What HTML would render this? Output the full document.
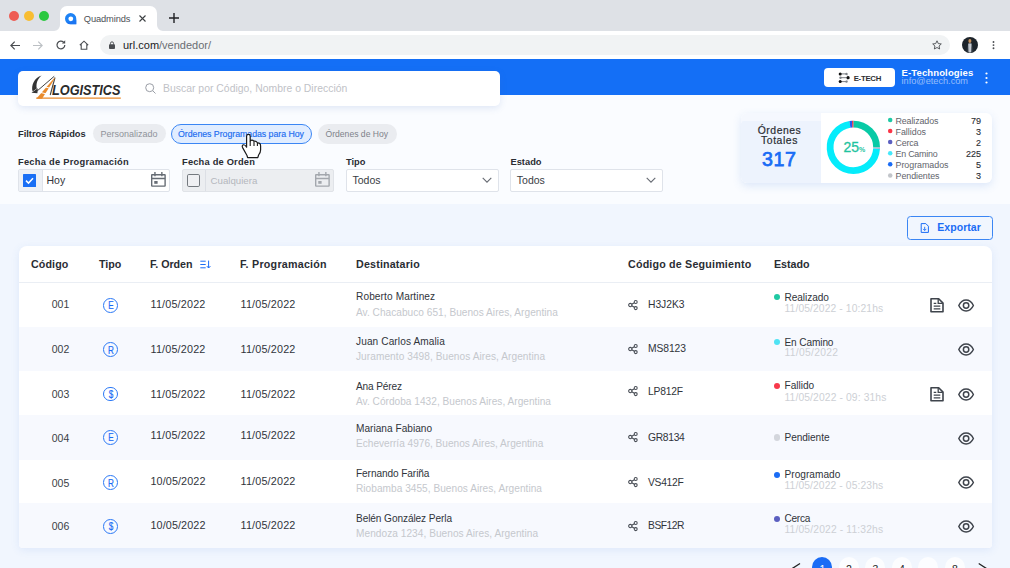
<!DOCTYPE html>
<html lang="es">
<head>
<meta charset="utf-8">
<title>Quadminds</title>
<style>
*{box-sizing:border-box;margin:0;padding:0}
html,body{width:1010px;height:568px;overflow:hidden}
body{position:relative;font-family:"Liberation Sans",sans-serif;background:#f1f6fe;color:#222}
.abs{position:absolute}
.t{position:absolute;white-space:nowrap;line-height:1}
svg{overflow:visible}
</style>
</head>
<body>
<div class="abs" style="left:0px;top:0px;width:1010px;height:31px;background:#dee1e6"></div>
<div class="abs" style="left:9px;top:11px;width:10px;height:10px;border-radius:50%;background:#ee5c54"></div>
<div class="abs" style="left:24px;top:11px;width:10px;height:10px;border-radius:50%;background:#f8bd32"></div>
<div class="abs" style="left:39px;top:11px;width:10px;height:10px;border-radius:50%;background:#2bc840"></div>
<div class="abs" style="left:60px;top:6px;width:97px;height:25px;background:#fff;border-radius:7px 7px 0 0"></div>
<svg class="abs" style="left:54px;top:25px;" width="6" height="6" viewBox="0 0 6 6"><path d="M6 0v6H0A6 6 0 0 0 6 0z" fill="#fff"/></svg>
<svg class="abs" style="left:157px;top:25px;" width="6" height="6" viewBox="0 0 6 6"><path d="M0 0v6h6A6 6 0 0 1 0 0z" fill="#fff"/></svg>
<svg class="abs" style="left:65.1px;top:12.7px;" width="11.3" height="11.3" viewBox="0 0 11.3 11.3"><path d="M5.650 0A5.650 5.650 0 1 0 5.650 11.300H11.300V5.650A5.650 5.650 0 0 0 5.650 0z" fill="#1d82f5"/><path d="M1.400 9.400A5.650 5.650 0 0 0 5.650 11.300H11.300V7z" fill="#1a6cf0" opacity=".6"/><circle cx="5.800" cy="5.800" r="2.400" fill="#fff"/></svg>
<div class="t" style="top:15px;font-size:9.3px;color:#4d5156;letter-spacing:-0.118px;left:83.8px;">Quadminds</div>
<svg class="abs" style="left:139px;top:14.5px;" width="7" height="7" viewBox="0 0 7 7"><path d="M.5.5l6 6M6.500 .5l-6 6" stroke="#3c4043" stroke-width="1.1" fill="none"/></svg>
<svg class="abs" style="left:168.5px;top:13px;" width="10" height="10" viewBox="0 0 10 10"><path d="M5 0v10M0 5h10" stroke="#202124" stroke-width="1.4" fill="none"/></svg>
<div class="abs" style="left:0px;top:31px;width:1010px;height:28px;background:#fff"></div>
<div class="abs" style="left:100px;top:35px;width:850px;height:20px;border-radius:10px;background:#f1f3f4"></div>
<svg class="abs" style="left:9.5px;top:40.5px;" width="10" height="9" viewBox="0 0 10 9"><path d="M10 4.500H1M4.700 .7L.9 4.500l3.800 3.800" stroke="#4a4d51" stroke-width="1.2" fill="none"/></svg>
<svg class="abs" style="left:32.5px;top:40.5px;" width="10" height="9" viewBox="0 0 10 9"><path d="M0 4.500h9M5.300 .7l3.800 3.800-3.800 3.800" stroke="#bcc0c4" stroke-width="1.2" fill="none"/></svg>
<svg class="abs" style="left:55.5px;top:40px;" width="10" height="10" viewBox="0 0 10 10"><path d="M8.800 5A3.900 3.900 0 1 1 7.600 2.200" stroke="#4a4d51" stroke-width="1.2" fill="none"/><path d="M9.200 .3v3.300H5.900z" fill="#4a4d51"/></svg>
<svg class="abs" style="left:78.5px;top:40px;" width="10" height="10" viewBox="0 0 10 10"><path d="M.8 5.200L5 1.200l4.200 4M2.200 4.300v4.900h5.600V4.300" stroke="#4a4d51" stroke-width="1.1" fill="none"/></svg>
<svg class="abs" style="left:109px;top:41px;" width="6" height="8.2" viewBox="0 0 7 9"><rect x="0" y="3.600" width="7" height="5.400" rx="1" fill="#4a4d51"/><path d="M1.700 4V2.500a1.800 1.800 0 0 1 3.600 0V4" stroke="#4a4d51" stroke-width="1.100" fill="none"/></svg>
<div class="t" style="top:40px;font-size:11px;color:#202124;left:123px;">url.com<span style="color:#6a6e73">/vendedor/</span></div>
<svg class="abs" style="left:931.5px;top:40px;" width="10" height="10" viewBox="0 0 10 10"><path d="M5 .8l1.300 2.800 3 .35-2.250 2.050.6 3L5 7.500 2.350 9l.6-3L.7 3.950l3-.35z" stroke="#4a4d51" stroke-width=".9" fill="none" stroke-linejoin="round"/></svg>
<svg class="abs" style="left:962px;top:37px;" width="16" height="16" viewBox="0 0 16 16"><circle cx="8" cy="8" r="8" fill="#1d242b"/><path d="M4.500 14.800C4.800 9 6 6.500 8 6.500s3.200 2.500 3.500 8.300A8 8 0 0 1 4.500 14.800z" fill="#2c353e"/><path d="M6.300 6.500h3.200l-.3 8.800a8 8 0 0 1-2.600 0z" fill="#dfe3e8"/><path d="M7.300 6.500h1.200v8.700h-1.200z" fill="#8b949e" opacity=".55"/><ellipse cx="7.900" cy="3.900" rx="1.500" ry="2" fill="#c9945f"/></svg>
<svg class="abs" style="left:992.2px;top:40px;" width="3" height="11" viewBox="0 0 3 11"><circle cx="1.500" cy="2" r=".95" fill="#4a4d51"/><circle cx="1.500" cy="5.100" r=".95" fill="#4a4d51"/><circle cx="1.500" cy="8.300" r=".95" fill="#4a4d51"/></svg>
<div class="abs" style="left:0px;top:94px;width:1010px;height:110px;background:#fafcff"></div>
<div class="abs" style="left:0px;top:59px;width:1010px;height:35.5px;background:#146ff6"></div>
<div class="abs" style="left:18px;top:71px;width:482px;height:34.5px;background:#fff;border-radius:5px;box-shadow:0 2px 7px rgba(70,110,190,.15)"></div>
<svg class="abs" style="left:25px;top:70px;" width="105" height="35" viewBox="25 70 105 35">
<path d="M41.600 75.400C34.500 77.500 30.800 85 32.600 91.500L36.800 88.400C35.800 83.500 37.600 78.500 41.600 75.400z" fill="#333"/>
<path d="M31.500 92.800l6.300-4.600-.4 5z" fill="#333"/>
<path d="M54.200 76.300L36.500 91.500" stroke="#444" stroke-width="1" fill="none"/>
<path d="M55 77.500L50.200 95" stroke="#444" stroke-width="1.100" fill="none"/>
<path d="M54.300 78L55 78.300 42 98.800H36.300z" fill="#e98a2b"/>
<path d="M44 86.500l5 1.500M40 92.300l6 1.500" stroke="#fff" stroke-width="1" fill="none"/>
<path d="M36.300 98.200H120.800" stroke="#e98a2b" stroke-width="1.300" fill="none"/>
<text x="52" y="95" font-family="Liberation Sans, sans-serif" font-weight="700" font-style="italic" font-size="14" fill="#2b2b2b" textLength="68.500" lengthAdjust="spacingAndGlyphs">LOGISTICS</text>
</svg>
<svg class="abs" style="left:144.5px;top:82.8px;" width="11" height="11" viewBox="0 0 11 11"><circle cx="4.700" cy="4.700" r="4" stroke="#9a9ea6" stroke-width="1" fill="none"/><path d="M7.700 7.700l2.800 2.800" stroke="#9a9ea6" stroke-width="1" fill="none"/></svg>
<div class="t" style="top:84px;font-size:10.4px;color:#bfc2c7;letter-spacing:0.018px;left:163px;">Buscar por Código, Nombre o Dirección</div>
<div class="abs" style="left:824px;top:68px;width:71px;height:19px;background:#fff;border-radius:4px"></div>
<svg class="abs" style="left:838px;top:71px;" width="12" height="14" viewBox="838 71 12 14"><g stroke="#6b6f75" stroke-width=".9" fill="none"><path d="M840.200 73.900H846.500M840.500 77.700H848.100M840.200 81.600H846.500"/><path d="M846.500 73.900L848.100 77.700 846.500 81.600" stroke="#b5b8bd" stroke-width=".6"/></g>
<g fill="#111"><circle cx="840.200" cy="73.900" r="1.500"/><circle cx="848.100" cy="77.700" r="1.600"/><circle cx="840.200" cy="81.600" r="1.500"/></g>
<g fill="#7d8187"><circle cx="846.500" cy="73.900" r="1.200"/><circle cx="840.500" cy="77.700" r="1.200"/><circle cx="846.500" cy="81.600" r="1.200"/></g></svg>
<div class="t" style="top:75px;font-size:7.8px;color:#2e3034;font-weight:700;letter-spacing:-0.289px;left:853.7px;">E-TECH</div>
<div class="t" style="top:68px;font-size:9.5px;color:#fff;font-weight:700;left:901.5px;letter-spacing:.13px;">E-Technologies</div>
<div class="t" style="top:77px;font-size:9.2px;color:rgba(255,255,255,.55);left:901.5px;">info@etech.com</div>
<svg class="abs" style="left:984.5px;top:72px;" width="3" height="12" viewBox="0 0 3 12"><circle cx="1.500" cy="1.500" r="1.100" fill="#fff"/><circle cx="1.500" cy="6" r="1.100" fill="#fff"/><circle cx="1.500" cy="10.500" r="1.100" fill="#fff"/></svg>
<div class="t" style="top:130px;font-size:9.3px;color:#2a2d33;font-weight:700;left:18px;">Filtros Rápidos</div>
<div class="abs" style="left:92.8px;top:124.2px;width:72.8px;height:19.2px;background:#eaecf0;border-radius:10px"></div>
<div class="t" style="top:130px;font-size:9px;color:#8f939a;left:100.5px;">Personalizado</div>
<div class="abs" style="left:171px;top:124px;width:140.5px;height:19.5px;background:#e1edff;border:1px solid #3b86f4;border-radius:10px"></div>
<div class="t" style="top:130px;font-size:8.8px;color:#1b6cf0;letter-spacing:-0.042px;left:178px;-webkit-text-stroke:.15px #1b6cf0;">Órdenes Programadas para Hoy</div>
<div class="abs" style="left:317.5px;top:124px;width:79px;height:19.5px;background:#eaecf0;border-radius:10px"></div>
<div class="t" style="top:130px;font-size:8.6px;color:#7e828a;left:325.5px;">Órdenes de Hoy</div>
<div class="t" style="top:158px;font-size:9.3px;color:#2a2d33;font-weight:700;left:18px;letter-spacing:.26px;">Fecha de Programación</div>
<div class="abs" style="left:18px;top:168.5px;width:152px;height:23px;background:#fff;border:1px solid #dfe3ea;border-radius:2px"></div>
<div class="abs" style="left:19px;top:169.5px;width:23.5px;height:21px;background:#eef1f6;border-right:1px solid #dfe3ea"></div>
<div class="abs" style="left:23px;top:174px;width:13px;height:12.8px;background:#1a6ff5;border-radius:.6px"></div>
<svg class="abs" style="left:23px;top:174px;" width="13" height="13" viewBox="0 0 13 13"><path d="M3 6.600l2.500 2.500L10 4.300" stroke="#fff" stroke-width="1.500" fill="none"/></svg>
<div class="t" style="top:175px;font-size:10.5px;color:#33363c;left:46.5px;">Hoy</div>
<svg class="abs" style="left:150.9px;top:171.9px;" width="14.8" height="14.9" viewBox="0 0 15 15"><g stroke="#666c74" stroke-width="1.400" fill="none"><rect x=".7" y="2.700" width="13.600" height="11.600" rx=".4"/><path d="M.7 6.600h13.600M4 0v4.200M11 0v4.200"/></g><rect x="3.300" y="9.100" width="3.400" height="2.800" fill="#666c74"/></svg>
<div class="t" style="top:158px;font-size:9.3px;color:#2a2d33;font-weight:700;left:182px;letter-spacing:.2px;">Fecha de Orden</div>
<div class="abs" style="left:182px;top:168.5px;width:152px;height:23px;background:#eceef1;border:1px solid #e0e3e8;border-radius:2px"></div>
<div class="abs" style="left:183px;top:169.5px;width:23px;height:21px;border-right:1px solid #dcdfe5"></div>
<div class="abs" style="left:187.3px;top:173.9px;width:12.9px;height:12.8px;border:1.400px solid #74797f;border-radius:1.800px;background:#eff0f3"></div>
<div class="t" style="top:176px;font-size:9.7px;color:#b4b7bd;left:210.5px;">Cualquiera</div>
<svg class="abs" style="left:315px;top:171.9px;" width="14.8" height="14.9" viewBox="0 0 15 15"><g stroke="#a3a7ad" stroke-width="1.400" fill="none"><rect x=".7" y="2.700" width="13.600" height="11.600" rx=".4"/><path d="M.7 6.600h13.600M4 0v4.200M11 0v4.200"/></g><rect x="3.300" y="9.100" width="3.400" height="2.800" fill="#a3a7ad"/></svg>
<div class="t" style="top:158px;font-size:9.3px;color:#2a2d33;font-weight:700;left:346px;">Tipo</div>
<div class="abs" style="left:346px;top:168.5px;width:152.5px;height:23px;background:#fff;border:1px solid #dfe3ea;border-radius:2px"></div>
<div class="t" style="top:175px;font-size:10.5px;color:#393d45;left:352.5px;">Todos</div>
<svg class="abs" style="left:482px;top:177px;" width="10" height="6" viewBox="0 0 10 6"><path d="M.7 .8l4.300 4.300L9.300 .8" stroke="#676b73" stroke-width="1.100" fill="none"/></svg>
<div class="t" style="top:158px;font-size:9.3px;color:#2a2d33;font-weight:700;left:510.5px;">Estado</div>
<div class="abs" style="left:510px;top:168.5px;width:152.5px;height:23px;background:#fff;border:1px solid #dfe3ea;border-radius:2px"></div>
<div class="t" style="top:175px;font-size:10.5px;color:#393d45;left:516.8px;">Todos</div>
<svg class="abs" style="left:646px;top:177px;" width="10" height="6" viewBox="0 0 10 6"><path d="M.7 .8l4.300 4.300L9.300 .8" stroke="#676b73" stroke-width="1.100" fill="none"/></svg>
<div class="abs" style="left:741px;top:112.5px;width:251px;height:70.5px;background:#fff;border-radius:6px;box-shadow:0 3px 8px rgba(80,130,220,.17)"></div>
<div class="abs" style="left:741px;top:112.5px;width:79.5px;height:9px;background:#f5f8fe;border-radius:6px 0 0 0"></div>
<div class="abs" style="left:740.5px;top:121px;width:80px;height:62px;background:#edf3fd;border-radius:3px 0 0 6px"></div>
<div class="t" style="top:126px;font-size:10.4px;color:#2a2d33;letter-spacing:0.516px;left:679.5px;width:200px;text-align:center;-webkit-text-stroke:.2px #2a2d33;">Órdenes</div>
<div class="t" style="top:136px;font-size:10.4px;color:#2a2d33;letter-spacing:0.550px;left:679.5px;width:200px;text-align:center;-webkit-text-stroke:.2px #2a2d33;">Totales</div>
<div class="t" style="top:150px;font-size:19.6px;color:#1a6cf5;letter-spacing:0.566px;left:679.2px;width:200px;text-align:center;-webkit-text-stroke:.75px #1a6cf5;">317</div>
<svg class="abs" style="left:0;top:0" width="1010" height="568" viewBox="0 0 1010 568"><path d="M853.35 124.05A23.25 23.25 0 0 1 876.60 147.50" stroke="#08caa6" stroke-width="6.8" fill="none"/><path d="M876.60 147.50A23.25 23.25 0 0 1 876.56 148.72" stroke="#b9a9c9" stroke-width="6.8" fill="none"/><path d="M876.56 148.72A23.25 23.25 0 1 1 849.91 124.31" stroke="#05ecfb" stroke-width="6.8" fill="none"/><path d="M849.91 124.31A23.25 23.25 0 0 1 852.13 124.08" stroke="#1f5cf5" stroke-width="6.8" fill="none"/><path d="M852.13 124.08A23.25 23.25 0 0 1 853.35 124.05" stroke="#e8344e" stroke-width="6.8" fill="none"/></svg>
<div class="t" style="left:804.200px;width:100px;text-align:center;top:139.98px;font-size:14px;color:#1fc3a0;-webkit-text-stroke:.3px #1fc3a0">25<span style="font-size:7px;font-weight:700;-webkit-text-stroke:0;letter-spacing:-.2px">%</span></div>
<div class="t" style="top:117px;font-size:8.9px;color:#5f646c;letter-spacing:-0.113px;left:895.5px;">Realizados</div>
<div class="t" style="top:117px;font-size:9px;color:#2a2d33;left:781px;width:200px;text-align:right;-webkit-text-stroke:.12px #2a2d33;">79</div>
<div class="t" style="top:128px;font-size:8.9px;color:#5f646c;letter-spacing:-0.009px;left:895.5px;">Fallidos</div>
<div class="t" style="top:128px;font-size:9px;color:#2a2d33;left:781px;width:200px;text-align:right;-webkit-text-stroke:.12px #2a2d33;">3</div>
<div class="t" style="top:139px;font-size:8.9px;color:#5f646c;letter-spacing:-0.208px;left:895.5px;">Cerca</div>
<div class="t" style="top:139px;font-size:9px;color:#2a2d33;left:781px;width:200px;text-align:right;-webkit-text-stroke:.12px #2a2d33;">2</div>
<div class="t" style="top:150px;font-size:8.9px;color:#5f646c;letter-spacing:-0.214px;left:895.5px;">En Camino</div>
<div class="t" style="top:150px;font-size:9px;color:#2a2d33;left:781px;width:200px;text-align:right;-webkit-text-stroke:.12px #2a2d33;">225</div>
<div class="t" style="top:161px;font-size:8.9px;color:#5f646c;letter-spacing:-0.030px;left:895.5px;">Programados</div>
<div class="t" style="top:161px;font-size:9px;color:#2a2d33;left:781px;width:200px;text-align:right;-webkit-text-stroke:.12px #2a2d33;">5</div>
<div class="t" style="top:172px;font-size:8.9px;color:#5f646c;letter-spacing:-0.044px;left:895.5px;">Pendientes</div>
<div class="t" style="top:172px;font-size:9px;color:#2a2d33;left:781px;width:200px;text-align:right;-webkit-text-stroke:.12px #2a2d33;">3</div>
<svg class="abs" style="left:0;top:0" width="1010" height="200" viewBox="0 0 1010 200"><circle cx="890.200" cy="119.90" r="2.250" fill="#1fc9a5"/><circle cx="890.200" cy="131.00" r="2.250" fill="#fb3547"/><circle cx="890.200" cy="142.10" r="2.250" fill="#5b5fc0"/><circle cx="890.200" cy="153.20" r="2.250" fill="#45e8fa"/><circle cx="890.200" cy="164.30" r="2.250" fill="#1a6cf5"/><circle cx="890.200" cy="175.40" r="2.250" fill="#c2c5ca"/></svg>
<div class="abs" style="left:907px;top:216px;width:86px;height:24px;border:1px solid #3b86f4;border-radius:3.500px"></div>
<svg class="abs" style="left:920px;top:222.7px;" width="9" height="10" viewBox="0 0 9 10"><path d="M1.200 .6h4.600l2.600 2.600v6.200H1.200z" stroke="#1a6cf5" stroke-width="1" fill="none" stroke-linejoin="round"/><path d="M4.700 3.800v3.600M3.100 5.900l1.600 1.600 1.600-1.600" stroke="#1a6cf5" stroke-width=".9" fill="none"/></svg>
<div class="t" style="top:222px;font-size:10.5px;color:#1a6cf5;font-weight:700;letter-spacing:0.052px;left:937.3px;">Exportar</div>
<div class="abs" style="left:19px;top:246px;width:973px;height:302px;background:#fff;border-radius:8px 8px 4px 4px;box-shadow:0 2px 9px rgba(80,130,220,.12)"></div>
<div class="abs" style="left:19px;top:281.7px;width:973px;height:1px;background:#eaeef4"></div>
<div class="abs" style="left:19px;top:327px;width:973px;height:44px;background:#f7f9fe;"></div>
<div class="abs" style="left:19px;top:415px;width:973px;height:45px;background:#f7f9fe;"></div>
<div class="abs" style="left:19px;top:503px;width:973px;height:45px;background:#f7f9fe;border-radius:0 0 4px 4px"></div>
<div class="t" style="top:259px;font-size:10.7px;color:#2a2d33;font-weight:700;letter-spacing:0.109px;left:31px;">Código</div>
<div class="t" style="top:259px;font-size:10.7px;color:#2a2d33;font-weight:700;letter-spacing:-0.022px;left:99px;">Tipo</div>
<div class="t" style="top:259px;font-size:10.7px;color:#2a2d33;font-weight:700;letter-spacing:-0.038px;left:150px;">F. Orden</div>
<svg class="abs" style="left:200px;top:260px;" width="11" height="9" viewBox="0 0 11 9"><path d="M.3 1.200h5.400M.3 4.500h5.400M.3 7.800h5.400" stroke="#1a6cf5" stroke-width="1" fill="none"/><path d="M8.600 .6v7.300M6.800 6.100l1.800 1.900 1.800-1.900" stroke="#1a6cf5" stroke-width="1" fill="none"/></svg>
<div class="t" style="top:259px;font-size:10.7px;color:#2a2d33;font-weight:700;letter-spacing:0.250px;left:240px;">F. Programación</div>
<div class="t" style="top:259px;font-size:10.7px;color:#2a2d33;font-weight:700;letter-spacing:0.180px;left:356px;">Destinatario</div>
<div class="t" style="top:259px;font-size:10.7px;color:#2a2d33;font-weight:700;letter-spacing:0.191px;left:628px;">Código de Seguimiento</div>
<div class="t" style="top:259px;font-size:10.7px;color:#2a2d33;font-weight:700;letter-spacing:-0.029px;left:774px;">Estado</div>
<div class="t" style="top:299px;font-size:10.5px;color:#3a3d44;left:-39.5px;width:200px;text-align:center;">001</div>
<div class="abs" style="left:103.1px;top:297.8px;width:14.8px;height:14.8px;border:1.200px solid #2a78f6;border-radius:50%"></div>
<div class="t" style="top:300px;font-size:11px;color:#1a6cf5;left:10.599999999999994px;width:200px;text-align:center;transform:scaleX(.74);-webkit-text-stroke:.2px #1a6cf5;">E</div>
<div class="t" style="top:299px;font-size:10.8px;color:#30343b;letter-spacing:0.175px;left:150.5px;">11/05/2022</div>
<div class="t" style="top:299px;font-size:10.8px;color:#30343b;letter-spacing:0.175px;left:240.5px;">11/05/2022</div>
<div class="t" style="top:292px;font-size:10.1px;color:#30343b;letter-spacing:0.114px;left:356px;">Roberto Martinez</div>
<div class="t" style="top:308px;font-size:10.1px;color:#c5c8cd;letter-spacing:0.032px;left:356px;">Av. Chacabuco 651, Buenos Aires, Argentina</div>
<svg class="abs" style="left:627.6px;top:299.79999999999995px;" width="10" height="10" viewBox="0 0 10 10"><g stroke="#474c54" stroke-width="1.050" fill="none"><circle cx="2.300" cy="5" r="1.650"/><circle cx="7.700" cy="1.900" r="1.500"/><circle cx="7.700" cy="8.100" r="1.500"/><path d="M3.750 4.200l2.600-1.500M3.750 5.800l2.600 1.500"/></g></svg>
<div class="t" style="top:300px;font-size:10.3px;color:#30343b;letter-spacing:-0.024px;left:648px;">H3J2K3</div>
<div class="abs" style="left:774px;top:293.9px;width:6.3px;height:6.3px;border-radius:50%;background:#20c9a3"></div>
<div class="t" style="top:293px;font-size:10.1px;color:#30343b;letter-spacing:-0.069px;left:784.5px;">Realizado</div>
<div class="t" style="top:304px;font-size:10.3px;color:#cdd0d5;letter-spacing:0.110px;left:784.5px;">11/05/2022 - 10:21hs</div>
<svg class="abs" style="left:929.7px;top:298.09999999999997px;" width="14" height="14.6" viewBox="0 0 14 14.6"><path d="M1 .8h7.700L13 5.100v8.700H1z" stroke="#3f444c" stroke-width="1.600" fill="none" stroke-linejoin="round"/><path d="M8.200 1v4.300h4.500" stroke="#3f444c" stroke-width="1.300" fill="none"/><path d="M3.700 5.300h2.600M3.700 8.100h6.600M3.700 10.900h6.600" stroke="#3f444c" stroke-width="1.300" fill="none"/></svg>
<svg class="abs" style="left:957.7px;top:298.9px;" width="16.2" height="13" viewBox="0 0 16.2 13"><path d="M.8 6.500C2.500 3 5.200 1 8.100 1s5.600 2 7.300 5.500C13.700 10 11 12 8.100 12S2.500 10 .8 6.500z" stroke="#3f444c" stroke-width="1.500" fill="none" stroke-linejoin="round"/><circle cx="8.100" cy="6.500" r="2.700" stroke="#3f444c" stroke-width="1.500" fill="none"/></svg>
<div class="t" style="top:344px;font-size:10.5px;color:#3a3d44;left:-39.5px;width:200px;text-align:center;">002</div>
<div class="abs" style="left:103.1px;top:342.40000000000003px;width:14.8px;height:14.8px;border:1.200px solid #2a78f6;border-radius:50%"></div>
<div class="t" style="top:345px;font-size:11px;color:#1a6cf5;left:10.599999999999994px;width:200px;text-align:center;transform:scaleX(.74);-webkit-text-stroke:.2px #1a6cf5;">R</div>
<div class="t" style="top:344px;font-size:10.8px;color:#30343b;letter-spacing:0.175px;left:150.5px;">11/05/2022</div>
<div class="t" style="top:344px;font-size:10.8px;color:#30343b;letter-spacing:0.175px;left:240.5px;">11/05/2022</div>
<div class="t" style="top:337px;font-size:10.1px;color:#30343b;letter-spacing:0.110px;left:356px;">Juan Carlos Amalia</div>
<div class="t" style="top:352px;font-size:10.1px;color:#c5c8cd;letter-spacing:0.071px;left:356px;">Juramento 3498, Buenos Aires, Argentina</div>
<svg class="abs" style="left:627.6px;top:343.7px;" width="10" height="10" viewBox="0 0 10 10"><g stroke="#474c54" stroke-width="1.050" fill="none"><circle cx="2.300" cy="5" r="1.650"/><circle cx="7.700" cy="1.900" r="1.500"/><circle cx="7.700" cy="8.100" r="1.500"/><path d="M3.750 4.200l2.600-1.500M3.750 5.800l2.600 1.500"/></g></svg>
<div class="t" style="top:344px;font-size:10.3px;color:#30343b;letter-spacing:-0.094px;left:648px;">MS8123</div>
<div class="abs" style="left:774px;top:338.5px;width:6.3px;height:6.3px;border-radius:50%;background:#4fe3f4"></div>
<div class="t" style="top:338px;font-size:10.1px;color:#30343b;letter-spacing:-0.118px;left:784.5px;">En Camino</div>
<div class="t" style="top:348px;font-size:10.3px;color:#cdd0d5;letter-spacing:0.301px;left:784.5px;">11/05/2022</div>
<svg class="abs" style="left:957.7px;top:343.1px;" width="16.2" height="13" viewBox="0 0 16.2 13"><path d="M.8 6.500C2.500 3 5.200 1 8.100 1s5.600 2 7.300 5.500C13.700 10 11 12 8.100 12S2.500 10 .8 6.500z" stroke="#3f444c" stroke-width="1.500" fill="none" stroke-linejoin="round"/><circle cx="8.100" cy="6.500" r="2.700" stroke="#3f444c" stroke-width="1.500" fill="none"/></svg>
<div class="t" style="top:389px;font-size:10.5px;color:#3a3d44;left:-39.5px;width:200px;text-align:center;">003</div>
<div class="abs" style="left:103.1px;top:386.6px;width:14.8px;height:14.8px;border:1.200px solid #2a78f6;border-radius:50%"></div>
<div class="t" style="top:389px;font-size:11px;color:#1a6cf5;left:10.599999999999994px;width:200px;text-align:center;transform:scaleX(.74);-webkit-text-stroke:.2px #1a6cf5;">$</div>
<div class="t" style="top:389px;font-size:10.8px;color:#30343b;letter-spacing:0.175px;left:150.5px;">11/05/2022</div>
<div class="t" style="top:389px;font-size:10.8px;color:#30343b;letter-spacing:0.175px;left:240.5px;">11/05/2022</div>
<div class="t" style="top:382px;font-size:10.1px;color:#30343b;letter-spacing:-0.151px;left:356px;">Ana Pérez</div>
<div class="t" style="top:397px;font-size:10.1px;color:#c5c8cd;letter-spacing:0.029px;left:356px;">Av. Córdoba 1432, Buenos Aires, Argentina</div>
<svg class="abs" style="left:627.6px;top:386.09999999999997px;" width="10" height="10" viewBox="0 0 10 10"><g stroke="#474c54" stroke-width="1.050" fill="none"><circle cx="2.300" cy="5" r="1.650"/><circle cx="7.700" cy="1.900" r="1.500"/><circle cx="7.700" cy="8.100" r="1.500"/><path d="M3.750 4.200l2.600-1.500M3.750 5.800l2.600 1.500"/></g></svg>
<div class="t" style="top:387px;font-size:10.3px;color:#30343b;letter-spacing:-0.229px;left:648px;">LP812F</div>
<div class="abs" style="left:774px;top:383.0px;width:6.3px;height:6.3px;border-radius:50%;background:#f8394b"></div>
<div class="t" style="top:381px;font-size:10.1px;color:#30343b;letter-spacing:-0.022px;left:784.5px;">Fallido</div>
<div class="t" style="top:393px;font-size:10.3px;color:#cdd0d5;letter-spacing:0.121px;left:784.5px;">11/05/2022 - 09: 31hs</div>
<svg class="abs" style="left:929.7px;top:386.7px;" width="14" height="14.6" viewBox="0 0 14 14.6"><path d="M1 .8h7.700L13 5.100v8.700H1z" stroke="#3f444c" stroke-width="1.600" fill="none" stroke-linejoin="round"/><path d="M8.200 1v4.300h4.500" stroke="#3f444c" stroke-width="1.300" fill="none"/><path d="M3.700 5.300h2.600M3.700 8.100h6.600M3.700 10.900h6.600" stroke="#3f444c" stroke-width="1.300" fill="none"/></svg>
<svg class="abs" style="left:957.7px;top:387.5px;" width="16.2" height="13" viewBox="0 0 16.2 13"><path d="M.8 6.500C2.500 3 5.200 1 8.100 1s5.600 2 7.300 5.500C13.700 10 11 12 8.100 12S2.500 10 .8 6.500z" stroke="#3f444c" stroke-width="1.500" fill="none" stroke-linejoin="round"/><circle cx="8.100" cy="6.500" r="2.700" stroke="#3f444c" stroke-width="1.500" fill="none"/></svg>
<div class="t" style="top:433px;font-size:10.5px;color:#3a3d44;left:-39.5px;width:200px;text-align:center;">004</div>
<div class="abs" style="left:103.1px;top:430.1px;width:14.8px;height:14.8px;border:1.200px solid #2a78f6;border-radius:50%"></div>
<div class="t" style="top:432px;font-size:11px;color:#1a6cf5;left:10.599999999999994px;width:200px;text-align:center;transform:scaleX(.74);-webkit-text-stroke:.2px #1a6cf5;">E</div>
<div class="t" style="top:430px;font-size:10.8px;color:#30343b;letter-spacing:0.175px;left:150.5px;">11/05/2022</div>
<div class="t" style="top:430px;font-size:10.8px;color:#30343b;letter-spacing:0.175px;left:240.5px;">11/05/2022</div>
<div class="t" style="top:424px;font-size:10.1px;color:#30343b;letter-spacing:0.027px;left:356px;">Mariana Fabiano</div>
<div class="t" style="top:439px;font-size:10.1px;color:#c5c8cd;letter-spacing:-0.003px;left:356px;">Echeverría 4976, Buenos Aires, Argentina</div>
<svg class="abs" style="left:627.6px;top:432.4px;" width="10" height="10" viewBox="0 0 10 10"><g stroke="#474c54" stroke-width="1.050" fill="none"><circle cx="2.300" cy="5" r="1.650"/><circle cx="7.700" cy="1.900" r="1.500"/><circle cx="7.700" cy="8.100" r="1.500"/><path d="M3.750 4.200l2.600-1.500M3.750 5.800l2.600 1.500"/></g></svg>
<div class="t" style="top:433px;font-size:10.3px;color:#30343b;letter-spacing:-0.311px;left:648px;">GR8134</div>
<div class="abs" style="left:774px;top:434.4px;width:6.3px;height:6.3px;border-radius:50%;background:#d3d6dc"></div>
<div class="t" style="top:433px;font-size:10.1px;color:#30343b;letter-spacing:-0.055px;left:784.5px;">Pendiente</div>
<svg class="abs" style="left:957.7px;top:431.5px;" width="16.2" height="13" viewBox="0 0 16.2 13"><path d="M.8 6.500C2.500 3 5.200 1 8.100 1s5.600 2 7.300 5.500C13.700 10 11 12 8.100 12S2.500 10 .8 6.500z" stroke="#3f444c" stroke-width="1.500" fill="none" stroke-linejoin="round"/><circle cx="8.100" cy="6.500" r="2.700" stroke="#3f444c" stroke-width="1.500" fill="none"/></svg>
<div class="t" style="top:478px;font-size:10.5px;color:#3a3d44;left:-39.5px;width:200px;text-align:center;">005</div>
<div class="abs" style="left:103.1px;top:475.3px;width:14.8px;height:14.8px;border:1.200px solid #2a78f6;border-radius:50%"></div>
<div class="t" style="top:478px;font-size:11px;color:#1a6cf5;left:10.599999999999994px;width:200px;text-align:center;transform:scaleX(.74);-webkit-text-stroke:.2px #1a6cf5;">R</div>
<div class="t" style="top:476px;font-size:10.8px;color:#30343b;letter-spacing:0.095px;left:150.5px;">10/05/2022</div>
<div class="t" style="top:476px;font-size:10.8px;color:#30343b;letter-spacing:0.175px;left:240.5px;">11/05/2022</div>
<div class="t" style="top:469px;font-size:10.1px;color:#30343b;letter-spacing:-0.085px;left:356px;">Fernando Fariña</div>
<div class="t" style="top:484px;font-size:10.1px;color:#c5c8cd;letter-spacing:0.036px;left:356px;">Riobamba 3455, Buenos Aires, Argentina</div>
<svg class="abs" style="left:627.6px;top:477.2px;" width="10" height="10" viewBox="0 0 10 10"><g stroke="#474c54" stroke-width="1.050" fill="none"><circle cx="2.300" cy="5" r="1.650"/><circle cx="7.700" cy="1.900" r="1.500"/><circle cx="7.700" cy="8.100" r="1.500"/><path d="M3.750 4.200l2.600-1.500M3.750 5.800l2.600 1.500"/></g></svg>
<div class="t" style="top:478px;font-size:10.3px;color:#30343b;letter-spacing:-0.286px;left:648px;">VS412F</div>
<div class="abs" style="left:774px;top:471.79999999999995px;width:6.3px;height:6.3px;border-radius:50%;background:#1a6cf5"></div>
<div class="t" style="top:470px;font-size:10.1px;color:#30343b;letter-spacing:0.032px;left:784.5px;">Programado</div>
<div class="t" style="top:481px;font-size:10.3px;color:#cdd0d5;letter-spacing:0.110px;left:784.5px;">11/05/2022 - 05:23hs</div>
<svg class="abs" style="left:957.7px;top:476.0px;" width="16.2" height="13" viewBox="0 0 16.2 13"><path d="M.8 6.500C2.500 3 5.200 1 8.100 1s5.600 2 7.300 5.500C13.700 10 11 12 8.100 12S2.500 10 .8 6.500z" stroke="#3f444c" stroke-width="1.500" fill="none" stroke-linejoin="round"/><circle cx="8.100" cy="6.500" r="2.700" stroke="#3f444c" stroke-width="1.500" fill="none"/></svg>
<div class="t" style="top:521px;font-size:10.5px;color:#3a3d44;left:-39.5px;width:200px;text-align:center;">006</div>
<div class="abs" style="left:103.1px;top:518.9px;width:14.8px;height:14.8px;border:1.200px solid #2a78f6;border-radius:50%"></div>
<div class="t" style="top:521px;font-size:11px;color:#1a6cf5;left:10.599999999999994px;width:200px;text-align:center;transform:scaleX(.74);-webkit-text-stroke:.2px #1a6cf5;">$</div>
<div class="t" style="top:520px;font-size:10.8px;color:#30343b;letter-spacing:0.095px;left:150.5px;">10/05/2022</div>
<div class="t" style="top:520px;font-size:10.8px;color:#30343b;letter-spacing:0.175px;left:240.5px;">11/05/2022</div>
<div class="t" style="top:514px;font-size:10.1px;color:#30343b;letter-spacing:-0.085px;left:356px;">Belén González Perla</div>
<div class="t" style="top:529px;font-size:10.1px;color:#c5c8cd;letter-spacing:0.053px;left:356px;">Mendoza 1234, Buenos Aires, Argentina</div>
<svg class="abs" style="left:627.6px;top:520.8px;" width="10" height="10" viewBox="0 0 10 10"><g stroke="#474c54" stroke-width="1.050" fill="none"><circle cx="2.300" cy="5" r="1.650"/><circle cx="7.700" cy="1.900" r="1.500"/><circle cx="7.700" cy="8.100" r="1.500"/><path d="M3.750 4.200l2.600-1.500M3.750 5.800l2.600 1.500"/></g></svg>
<div class="t" style="top:521px;font-size:10.3px;color:#30343b;letter-spacing:-0.488px;left:648px;">BSF12R</div>
<div class="abs" style="left:774px;top:515.6px;width:6.3px;height:6.3px;border-radius:50%;background:#5b5fc0"></div>
<div class="t" style="top:514px;font-size:10.1px;color:#30343b;letter-spacing:-0.289px;left:784.5px;">Cerca</div>
<div class="t" style="top:525px;font-size:10.3px;color:#cdd0d5;letter-spacing:0.148px;left:784.5px;">11/05/2022 - 11:32hs</div>
<svg class="abs" style="left:957.7px;top:519.5px;" width="16.2" height="13" viewBox="0 0 16.2 13"><path d="M.8 6.500C2.500 3 5.200 1 8.100 1s5.600 2 7.300 5.500C13.700 10 11 12 8.100 12S2.500 10 .8 6.500z" stroke="#3f444c" stroke-width="1.500" fill="none" stroke-linejoin="round"/><circle cx="8.100" cy="6.500" r="2.700" stroke="#3f444c" stroke-width="1.500" fill="none"/></svg>
<svg class="abs" style="left:791.5px;top:563px;" width="9" height="11" viewBox="0 0 9 11"><path d="M8 .5L.7 5.200 8 10" stroke="#222" stroke-width="1.300" fill="none"/></svg>
<svg class="abs" style="left:977.5px;top:563px;" width="9" height="11" viewBox="0 0 9 11"><path d="M.7 .5L8 5.200 .7 10" stroke="#222" stroke-width="1.300" fill="none"/></svg>
<div class="abs" style="left:812.3px;top:557.4px;width:20px;height:20px;border-radius:50%;background:#1a6cf5"></div>
<div class="t" style="top:564px;font-size:10.5px;color:#fff;left:722.3px;width:200px;text-align:center;">1</div>
<div class="abs" style="left:838.8px;top:557.4px;width:20px;height:20px;border-radius:50%;background:rgba(255,255,255,.75)"></div>
<div class="t" style="top:564px;font-size:10.5px;color:#222;left:748.8px;width:200px;text-align:center;">2</div>
<div class="abs" style="left:865.3px;top:557.4px;width:20px;height:20px;border-radius:50%;background:rgba(255,255,255,.75)"></div>
<div class="t" style="top:564px;font-size:10.5px;color:#222;left:775.3px;width:200px;text-align:center;">3</div>
<div class="abs" style="left:891.8px;top:557.4px;width:20px;height:20px;border-radius:50%;background:rgba(255,255,255,.75)"></div>
<div class="t" style="top:564px;font-size:10.5px;color:#222;left:801.8px;width:200px;text-align:center;">4</div>
<div class="abs" style="left:918.3px;top:557.4px;width:20px;height:20px;border-radius:50%;background:rgba(255,255,255,.75)"></div>
<div class="abs" style="left:944.8px;top:557.4px;width:20px;height:20px;border-radius:50%;background:rgba(255,255,255,.75)"></div>
<div class="t" style="top:564px;font-size:10.5px;color:#222;left:854.8px;width:200px;text-align:center;">8</div>
<svg class="abs" style="left:230px;top:125px;" width="45" height="40" viewBox="230 125 45 40"><path d="M246.600 136.200Q246.600 134.400 248.400 134.400Q250.200 134.400 250.200 136.200V141Q252 139.400 254 141.200Q256 140.600 257.400 142.800Q260.600 142.600 260.600 146V150Q260.600 152.500 258.600 155L257.800 157.600H247.600L247 155.500Q244.500 151 242.600 147.600Q241.600 145.400 243.400 144.800Q245 144.400 246.600 147.200z" fill="#fff" stroke="#1a1a1a" stroke-width="1.200" stroke-linejoin="round"/>
<path d="M250.200 141V146M254 141.500V146M257.400 143V146" stroke="#1a1a1a" stroke-width="1.100" fill="none"/></svg>
</body>
</html>
